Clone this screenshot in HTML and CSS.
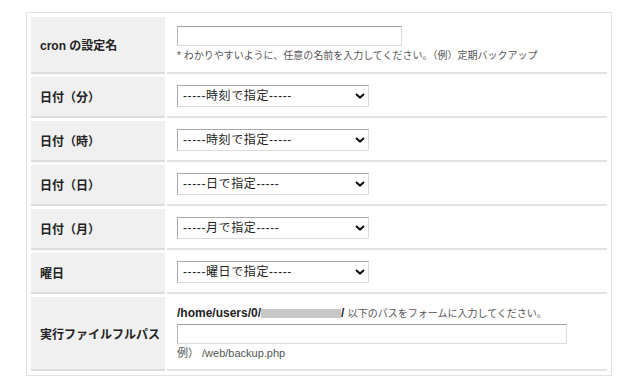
FILE: index.html
```html
<!DOCTYPE html>
<html lang="ja">
<head>
    <meta charset="UTF-8">
    <meta name="viewport" content="width=device-width, initial-scale=1.0">
    <title>cron 設定</title>
    <link rel="stylesheet" href="styles.css">
</head>
<body>
    <div class="cron-form">
        <div class="head">cron の設定名</div>
        <div class="cell">
            <input type="text" class="name-input">
            <p class="note">* わかりやすいように、任意の名前を入力してください。（例）定期バックアップ</p>
        </div>

        <div class="head">日付（分）</div>
        <div class="cell">
            <span class="select-wrap">
                <select><option>-----時刻で指定-----</option></select>
                <svg class="chev" width="10" height="6" viewBox="0 0 10 6"><path d="M1 1 L5 4.6 L9 1" fill="none" stroke="#111" stroke-width="2"/></svg>
            </span>
        </div>

        <div class="head">日付（時）</div>
        <div class="cell">
            <span class="select-wrap">
                <select><option>-----時刻で指定-----</option></select>
                <svg class="chev" width="10" height="6" viewBox="0 0 10 6"><path d="M1 1 L5 4.6 L9 1" fill="none" stroke="#111" stroke-width="2"/></svg>
            </span>
        </div>

        <div class="head">日付（日）</div>
        <div class="cell">
            <span class="select-wrap">
                <select><option>-----日で指定-----</option></select>
                <svg class="chev" width="10" height="6" viewBox="0 0 10 6"><path d="M1 1 L5 4.6 L9 1" fill="none" stroke="#111" stroke-width="2"/></svg>
            </span>
        </div>

        <div class="head">日付（月）</div>
        <div class="cell">
            <span class="select-wrap">
                <select><option>-----月で指定-----</option></select>
                <svg class="chev" width="10" height="6" viewBox="0 0 10 6"><path d="M1 1 L5 4.6 L9 1" fill="none" stroke="#111" stroke-width="2"/></svg>
            </span>
        </div>

        <div class="head">曜日</div>
        <div class="cell">
            <span class="select-wrap">
                <select><option>-----曜日で指定-----</option></select>
                <svg class="chev" width="10" height="6" viewBox="0 0 10 6"><path d="M1 1 L5 4.6 L9 1" fill="none" stroke="#111" stroke-width="2"/></svg>
            </span>
        </div>

        <div class="head">実行ファイルフルパス</div>
        <div class="cell">
            <div class="path-line"><b>/home/users/0/</b><span class="masked"></span><b>/</b> <span class="path-note">以下のパスをフォームに入力してください。</span></div>
            <input type="text" class="path-input">
            <p class="example">例）&nbsp;/web/backup.php</p>
        </div>
    </div>
</body>
</html>
```

FILE: styles.css
```css
body {
    margin: 0;
    padding: 12px 0 0 26px;
    background-color: #fff;
    font-family: "Liberation Sans", "Noto Sans CJK JP", sans-serif;
    font-size: 12px;
    color: #222;
}
.cron-form {
    width: 576px;
    border: 1px solid #e2e2e2;
    padding: 4px;
    display: grid;
    grid-template-columns: 134px 1fr;
    gap: 3px 2px;
}
.head {
    display: flex;
    align-items: center;
    padding-left: 9px;
    background-color: #f0f0f0;
    border-bottom: 2px solid #dcdcdc;
    font-weight: bold;
}
.cell {
    padding: 8px 10px 9px;
    border-bottom: 2px solid #e3e3e3;
}
.name-input, .path-input {
    display: block;
    box-sizing: border-box;
    height: 20px;
    margin: 0;
    border: 1px solid #dcdcdc;
    border-top-color: #a0a0a0;
    border-left-color: #b4b4b4;
    background: #fff;
}
.name-input {
    width: 225px;
    margin-top: 1px; /* first row sits one pixel lower */
}
.path-input {
    width: 390px;
    margin-top: 3px;
}
.note {
    margin: 3px 0 0;
    font-size: 10px;
    line-height: 14px;
    color: #555;
}
.select-wrap {
    position: relative;
    display: inline-block;
    vertical-align: top;
}
.select-wrap select {
    display: block;
    appearance: none;
    -webkit-appearance: none;
    box-sizing: border-box;
    width: 192px;
    height: 22px;
    margin: 0;
    padding: 0 0 0 5px;
    border: 1px solid #dcdcdc;
    border-top-color: #a8a8a8;
    border-left-color: #a8a8a8;
    border-radius: 0;
    background: #fff;
    font-family: inherit;
    font-size: 12px;
    letter-spacing: 0.6px;
    color: #222;
}
.chev {
    position: absolute;
    right: 4px;
    top: 8px;
    pointer-events: none;
}
.path-line {
    height: 16px;
    line-height: 16px;
    font-size: 12px;
}
.masked {
    display: inline-block;
    width: 80px;
    height: 9px;
    vertical-align: -1px;
    background-color: #c8c8c8;
}
.path-note {
    font-size: 10px;
    color: #555;
}
.example {
    margin: 2px 0 0;
    font-size: 11px;
    line-height: 14px;
    color: #555;
}
```
